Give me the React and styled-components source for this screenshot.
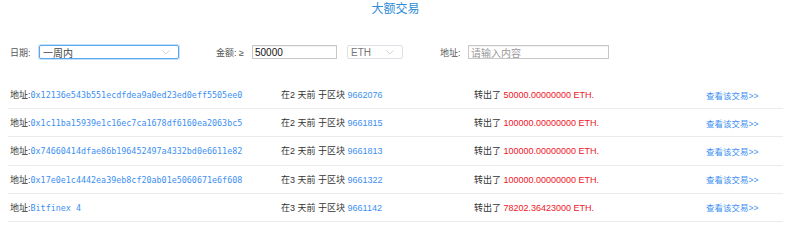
import React from 'react'
import styled, { createGlobalStyle } from 'styled-components'

const GlobalStyle = createGlobalStyle`
  body {
    margin: 0;
    background: #fff;
    font-family: "Liberation Sans", "Noto Sans CJK SC", sans-serif;
    color: #333;
  }
`

const rows = [
  { addr: '0x12136e543b551ecdfdea9a0ed23ed0eff5505ee0', days: 2, block: '9662076', amount: '50000.00000000' },
  { addr: '0x1c11ba15939e1c16ec7ca1678df6160ea2063bc5', days: 2, block: '9661815', amount: '100000.00000000' },
  { addr: '0x74660414dfae86b196452497a4332bd0e6611e82', days: 2, block: '9661813', amount: '100000.00000000' },
  { addr: '0x17e0e1c4442ea39eb8cf20ab01e5060671e6f608', days: 3, block: '9661322', amount: '100000.00000000' },
  { addr: 'Bitfinex 4', days: 3, block: '9661142', amount: '78202.36423000' },
]

const Page = styled.div`
  width: 800px;
  padding: 0 17px 0 8px;
  box-sizing: border-box;
`

const Title = styled.div`
  height: 19px;
  line-height: 19px;
  text-align: center;
  font-size: 12px;
  color: #2f8bd8;
`

const Filters = styled.div`
  display: flex;
  align-items: center;
  height: 14px;
  margin-top: 26px;
`

const Group = styled.div`
  display: flex;
  align-items: center;
  margin-left: ${({ offset }) => offset}px;
`

const Label = styled.span`
  width: ${({ w }) => w}px;
  font-size: 9px;
  color: #555;
  white-space: nowrap;
`

const Select = styled.div`
  width: ${({ w }) => w}px;
  height: 14px;
  box-sizing: border-box;
  border: 1px solid ${({ active }) => (active ? '#5aa7f2' : '#dcdfe6')};
  box-shadow: ${({ active }) => (active ? '0 0 0 1px rgba(90,167,242,0.35)' : 'none')};
  border-radius: 2px;
  display: flex;
  align-items: center;
  justify-content: space-between;
  padding: 0 8px 0 3px;
  font-size: 10px;
  color: ${({ active }) => (active ? '#444' : '#777')};
  margin-left: ${({ gap }) => gap || 0}px;
`

const Input = styled.div`
  width: ${({ w }) => w}px;
  height: 14px;
  box-sizing: border-box;
  border: 1px solid #c8c8c8;
  box-shadow: inset 0 1px 1px rgba(0,0,0,0.06);
  display: flex;
  align-items: center;
  padding: 0 2px;
  font-size: 10px;
  color: ${({ placeholder }) => (placeholder ? '#999' : '#111')};
`

const Chevron = () => (
  <svg width="8" height="5" viewBox="0 0 8 5">
    <path d="M0.5 0.5 L4 4 L7.5 0.5" fill="none" stroke="#c8ccd2" strokeWidth="0.8" />
  </svg>
)

const Table = styled.div`
  margin-top: 22px;
`

const Row = styled.div`
  display: grid;
  grid-template-columns: 271px 193px 232px 1fr;
  align-items: center;
  height: 28.2px;
  box-sizing: border-box;
  padding-left: 2px;
  border-bottom: 1px solid #ebebeb;
  font-size: 9px;
  color: #333;
`

const Cell = styled.div`
  white-space: nowrap;
`

const Mono = styled.span`
  font-family: "DejaVu Sans Mono", "Liberation Mono", monospace;
  font-size: 8.4px;
  color: #3d8ff2;
`

const Link = styled.span`
  color: #3d8ff2;
  font-size: ${({ small }) => (small ? '8.5px' : 'inherit')};
`

const Amount = styled.span`
  color: #f0141e;
`

export default function App() {
  return (
    <>
      <GlobalStyle />
      <Page>
        <Title>大额交易</Title>
        <Filters>
          <Group offset={2}>
            <Label w={29}>日期:</Label>
            <Select w={140} active>
              一周内
              <Chevron />
            </Select>
          </Group>
          <Group offset={37}>
            <Label w={36}>金额: ≥</Label>
            <Input w={85}>50000</Input>
            <Select w={56} gap={10}>
              ETH
              <Chevron />
            </Select>
          </Group>
          <Group offset={37}>
            <Label w={28}>地址:</Label>
            <Input w={141} placeholder>请输入内容</Input>
          </Group>
        </Filters>
        <Table>
          {rows.map((r) => (
            <Row key={r.block}>
              <Cell>
                地址:<Mono>{r.addr}</Mono>
              </Cell>
              <Cell>
                在{r.days} 天前 于区块 <Link>{r.block}</Link>
              </Cell>
              <Cell>
                转出了 <Amount>{r.amount} ETH.</Amount>
              </Cell>
              <Cell>
                <Link small>查看该交易&gt;&gt;</Link>
              </Cell>
            </Row>
          ))}
        </Table>
      </Page>
    </>
  )
}
